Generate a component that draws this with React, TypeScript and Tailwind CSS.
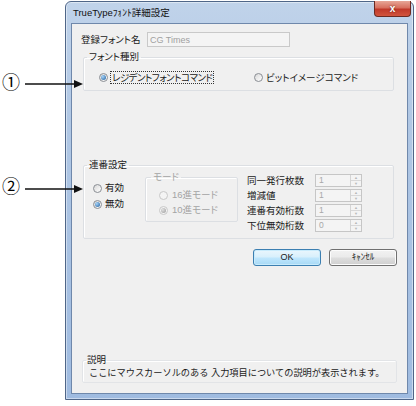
import React from "react";

const FONT = "font-['Liberation_Sans','Noto_Sans_CJK_JP',sans-serif]";

function Radio({ checked, disabled }: { checked?: boolean; disabled?: boolean }) {
  return (
    <span
      className={
        "relative inline-flex h-[9px] w-[9px] shrink-0 items-center justify-center rounded-full border " +
        (disabled
          ? "border-[#c8c8c8] bg-[#f4f4f4]"
          : "border-[#8a8e94] bg-[linear-gradient(135deg,#d8d8d8,#ffffff)]")
      }
    >
      {checked && (
        <span
          className={
            "h-[5px] w-[5px] rounded-full " +
            (disabled
              ? "bg-[radial-gradient(circle_at_35%_35%,#e0e0e0,#9a9a9a)]"
              : "bg-[radial-gradient(circle_at_35%_35%,#a8d4f8,#1c5c9c)]")
          }
        />
      )}
    </span>
  );
}

function Spin({ value }: { value: string }) {
  return (
    <div className="flex h-[13px] w-[47px] border border-[#c6c6c6] bg-[#f4f4f4]">
      <div className="flex flex-1 items-center pl-[3px] text-[8.5px] leading-none text-[#a8a8a8]">{value}</div>
      <div className="flex w-[11px] flex-col border-l border-[#d4d4d4]">
        <div className="flex flex-1 items-center justify-center border-b border-[#d8d8d8] text-[4px] leading-none text-[#b8b8b8]">▲</div>
        <div className="flex flex-1 items-center justify-center text-[4px] leading-none text-[#b8b8b8]">▼</div>
      </div>
    </div>
  );
}

export default function App() {
  return (
    <div className={"relative h-[406px] w-[416px] bg-white text-[#1a1a1a] " + FONT}>
      {/* annotations */}
      <div className="absolute left-[2px] top-[73px] text-[18px] leading-[20px] text-black">①</div>
      <svg className="absolute left-[24px] top-[79px]" width="62" height="10" viewBox="0 0 62 10">
        <line x1="1" y1="5" x2="52" y2="5" stroke="#111" strokeWidth="1.3" />
        <polygon points="50,1 59,5 50,9" fill="#111" />
      </svg>
      <div className="absolute left-[2px] top-[177px] text-[18px] leading-[20px] text-black">②</div>
      <svg className="absolute left-[24px] top-[184px]" width="62" height="10" viewBox="0 0 62 10">
        <line x1="1" y1="5" x2="52" y2="5" stroke="#111" strokeWidth="1.3" />
        <polygon points="50,1 59,5 50,9" fill="#111" />
      </svg>

      <div className="pl-[65px] pt-[1px]">
        {/* window */}
        <div className="flex h-[399px] w-[349px] flex-col rounded-t-[6px] border border-[#4f6688] bg-[linear-gradient(180deg,#c0d3ea_0%,#b0c7e4_30%,#9fbbe0_100%)] px-[5px] pb-[5px] shadow-[inset_0_0_0_1px_rgba(255,255,255,0.45)]">
          {/* title bar */}
          <div className="relative flex h-[21px] items-center">
            <span className="pl-[2px] text-[9.5px] leading-none text-[#111]">TrueTypeﾌｫﾝﾄ詳細設定</span>
            <div className="absolute right-[-3px] top-[-1px] flex h-[16px] w-[37px] items-center justify-center rounded-b-[4px] border border-t-0 border-[#6b2a22] bg-[linear-gradient(180deg,#e7a697_0%,#d7705f_45%,#c0392a_55%,#d2553e_100%)]">
              <span className="text-[10px] font-bold leading-none text-white [text-shadow:0_0_2px_#5a1a10]">x</span>
            </div>
          </div>

          {/* client */}
          <div className="flex flex-1 flex-col border border-[#6f88ab] bg-[#f0f0f0] text-[9.5px] leading-[12px] [font-feature-settings:'palt']">
            {/* font name row */}
            <div className="mt-[8px] flex items-center pl-[9px]">
              <span className="w-[66px]">登録フォント名</span>
              <div className="flex h-[15px] w-[143px] items-center border border-[#c9c9c9] bg-[#f4f4f4] pl-[2px] text-[9px] text-[#a0a0a0]">
                CG Times
              </div>
            </div>

            {/* font type group */}
            <fieldset className="ml-[11px] mt-[4px] w-[311px] rounded-[2px] border border-[#dcdfe3] pb-[6px] shadow-[inset_1px_1px_0_#fff]">
              <legend className="ml-[3px] px-[2px] leading-[12px]">フォント種別</legend>
              <div className="flex items-center pt-[8px]">
                <div className="flex w-[170px] items-center pl-[15px]">
                  <Radio checked />
                  <span className="ml-[2px] border border-dotted border-[#333] px-[1px] leading-[11px] tracking-[-0.5px]">レジデントフォントコマンド</span>
                </div>
                <div className="flex items-center">
                  <Radio />
                  <span className="ml-[3px]">ビットイメージコマンド</span>
                </div>
              </div>
            </fieldset>

            {/* serial group */}
            <fieldset className="ml-[11px] mt-[68px] w-[311px] rounded-[2px] border border-[#dcdfe3] pb-[5px] shadow-[inset_1px_1px_0_#fff]">
              <legend className="ml-[3px] px-[2px] leading-[12px]">連番設定</legend>
              <div className="flex items-start pt-[2px]">
                <div className="flex w-[61px] flex-col gap-[4px] pl-[9px] pt-[9px]">
                  <div className="flex h-[12px] items-center">
                    <Radio />
                    <span className="ml-[3px]">有効</span>
                  </div>
                  <div className="flex h-[12px] items-center">
                    <Radio checked />
                    <span className="ml-[3px]">無効</span>
                  </div>
                </div>

                <fieldset className="-mt-[2px] w-[93px] rounded-[2px] border border-[#dcdfe3] pb-[5px] text-[#a4a4a4] shadow-[inset_1px_1px_0_#fff]">
                  <legend className="ml-[5px] px-[2px] leading-[12px]">モード</legend>
                  <div className="flex flex-col gap-[3px] pl-[13px] pt-[6px]">
                    <div className="flex h-[12px] items-center">
                      <Radio disabled />
                      <span className="ml-[4px]">16進モード</span>
                    </div>
                    <div className="flex h-[12px] items-center">
                      <Radio checked disabled />
                      <span className="ml-[4px]">10進モード</span>
                    </div>
                  </div>
                </fieldset>

                <div className="ml-[9px] flex flex-col">
                  {[
                    ["同一発行枚数", "1"],
                    ["増減値", "1"],
                    ["連番有効桁数", "1"],
                    ["下位無効桁数", "0"],
                  ].map(([label, v]) => (
                    <div key={label} className="flex h-[15px] items-center">
                      <span className="w-[68px]">{label}</span>
                      <Spin value={v} />
                    </div>
                  ))}
                </div>
              </div>
            </fieldset>

            {/* buttons */}
            <div className="mt-[10px] flex justify-end gap-[8px] pr-[10px]">
              <div className="flex h-[17px] w-[68px] items-center justify-center rounded-[3px] border border-[#3c7fb1] bg-[linear-gradient(180deg,#eaf6fd_0%,#d9f0fc_45%,#bee6fd_55%,#a7d9f5_100%)] shadow-[inset_0_0_0_1px_#c8ebfc]">
                <span className="text-[9px] leading-none">OK</span>
              </div>
              <div className="flex h-[17px] w-[68px] items-center justify-center rounded-[3px] border border-[#707070] bg-[linear-gradient(180deg,#f2f2f2_0%,#ebebeb_45%,#dddddd_55%,#cfcfcf_100%)] shadow-[inset_0_0_0_1px_#fcfcfc]">
                <span className="text-[9px] leading-none">ｷｬﾝｾﾙ</span>
              </div>
            </div>

            {/* description */}
            <fieldset className="mb-[10px] ml-[10px] mt-auto w-[315px] rounded-[2px] border border-[#e2e4e7] pb-[3px] shadow-[inset_1px_1px_0_#fff]">
              <legend className="ml-[3px] px-[1px] leading-[12px]">説明</legend>
              <div className="pl-[6px] pt-[1px] text-[9.2px] leading-[12px] [font-feature-settings:normal]">ここにマウスカーソルのある 入力項目についての説明が表示されます。</div>
            </fieldset>
          </div>
        </div>
      </div>
    </div>
  );
}
